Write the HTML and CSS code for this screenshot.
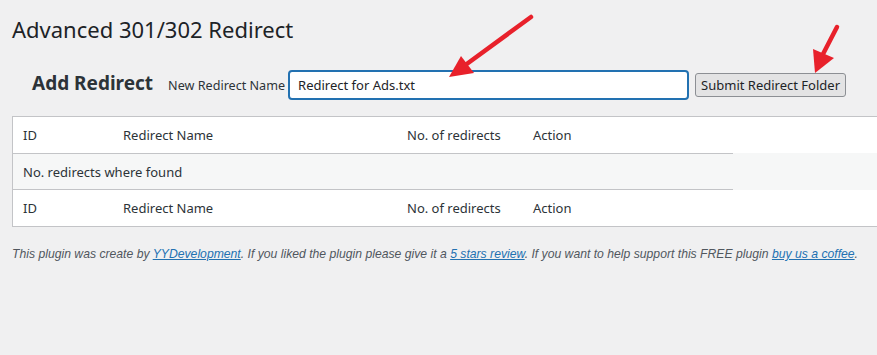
FILE: index.html
```html
<!DOCTYPE html>
<html lang="en">
<head>
  <meta charset="UTF-8">
  <title>Advanced 301/302 Redirect</title>
  <link rel="stylesheet" href="styles.css">
</head>
<body>
  <div class="wrap">
    <h1>Advanced 301/302 Redirect</h1>

    <form class="add-form">
      <h2>Add Redirect</h2>
      <label for="redirect-name">New Redirect Name</label>
      <input id="redirect-name" type="text" value="Redirect for Ads.txt">
      <button type="button" class="button">Submit Redirect Folder</button>
    </form>

    <div class="list-table">
      <div class="row head">
        <div class="cells">
          <span>ID</span><span>Redirect Name</span><span>No. of redirects</span><span>Action</span>
        </div>
      </div>
      <div class="row alt">
        <div class="cells empty">
          <span>No. redirects where found</span>
        </div>
      </div>
      <div class="row foot">
        <div class="cells">
          <span>ID</span><span>Redirect Name</span><span>No. of redirects</span><span>Action</span>
        </div>
      </div>
    </div>

    <p class="credits">
      This plugin was create by <a href="#">YYDevelopment</a>. If you liked the plugin please give it a <a href="#">5 stars review</a>. If you want to help support this FREE plugin <a href="#">buy us a coffee</a>.
    </p>
  </div>

  <!-- annotation arrows drawn over the screenshot -->
  <svg class="arrows" width="877" height="355" viewBox="0 0 877 355">
    <line x1="531" y1="17" x2="464" y2="66" stroke="#e8212b" stroke-width="4.5" stroke-linecap="round"/>
    <polygon points="449,77 461,56 474,73" fill="#e8212b"/>
    <line x1="837" y1="27" x2="822" y2="56" stroke="#e8212b" stroke-width="4.5" stroke-linecap="round"/>
    <polygon points="815,73 813,49 834,58" fill="#e8212b"/>
  </svg>
</body>
</html>
```

FILE: styles.css
```css
html {
  overflow: hidden;
}

body {
  margin: 0;
  background: #f0f0f1;
  color: #1d2327;
  font-family: "Noto Sans", "Open Sans", sans-serif;
  font-size: 13px;
  position: relative;
  width: 877px;
  height: 355px;
}

.wrap {
  padding: 14px 0 0 12px;
}

h1 {
  margin: 0;
  font-size: 22px;
  font-weight: 400;
  line-height: 30px;
  color: #1d2327;
}

.add-form {
  display: flex;
  align-items: baseline;
  margin-top: 26px;
}

.add-form h2 {
  margin: 0 15px 0 20px;
  font-size: 19px;
  font-weight: 700;
  color: #2c3338;
}

.add-form label {
  font-size: 12.6px;
  color: #2c3338;
  margin-right: 3px;
}

#redirect-name {
  width: 401px;
  height: 30px;
  box-sizing: border-box;
  padding: 0 8px;
  border: 2px solid #2271b1;
  border-radius: 4px;
  background: #fff;
  font-family: inherit;
  font-size: 13px;
  color: #1d2327;
  outline: none;
}

.button {
  margin-left: 6px;
  height: 24px;
  padding: 0 5px;
  border: 1px solid #8c8f94;
  border-radius: 3px;
  background: #e3e3e4;
  font-family: inherit;
  font-size: 13px;
  color: #1d2327;
}

.list-table {
  margin-top: 16px;
  margin-right: -20px;
  background: #fff;
  border: 1px solid #c3c4c7;
}

.row.alt {
  background: #f6f7f7;
}

.cells {
  display: grid;
  grid-template-columns: 100px 284px 126px 210px;
  width: 720px;
  height: 36px;
  align-items: center;
  color: #2c3338;
}

.cells span {
  padding-left: 10px;
}

.cells.empty {
  display: flex;
  border-top: 1px solid #c3c4c7;
  border-bottom: 1px solid #c3c4c7;
  height: 35px;
}

.credits {
  margin: 20px 0 0;
  font-family: "Liberation Sans", Arial, sans-serif;
  font-style: italic;
  font-size: 12.2px;
  color: #50575e;
}

.credits a {
  color: #2271b1;
}

.arrows {
  position: absolute;
  left: 0;
  top: 0;
  pointer-events: none;
}
```
